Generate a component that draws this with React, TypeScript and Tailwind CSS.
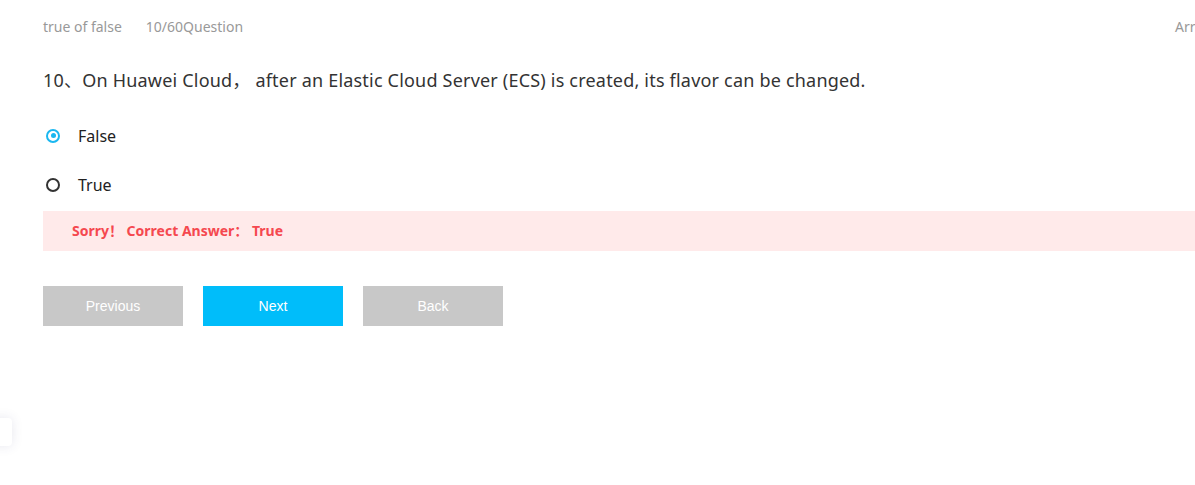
import React, { useState } from 'react';

const options = ['False', 'True'];

export default function App() {
    const [selected, setSelected] = useState('False');

    return (
        <div
            className="relative w-[1195px] h-[485px] overflow-hidden bg-white"
            style={{ fontFamily: '"Noto Sans", "Noto Sans CJK SC", sans-serif' }}
        >
            <div className="w-[1260px] pl-[43px]">
                <div className="flex items-center h-[54px] text-[14px] leading-[20px] text-[#999999]">
                    <span>true of false</span>
                    <span className="ml-[24px]">10/60Question</span>
                    <span className="ml-auto w-[85px]">Arrange</span>
                </div>
                <div className="mt-[3px] text-[18px] tracking-[0.2px] text-[#333333] leading-[46px]">
                    10、On Huawei Cloud， after an Elastic Cloud Server (ECS) is created, its flavor can be changed.
                </div>
                <div className="mt-[8px] flex flex-col">
                    {options.map((opt) => (
                        <label key={opt} className="flex items-center h-[49px] cursor-pointer" onClick={() => setSelected(opt)}>
                            <span
                                className={`ml-[3px] w-[14px] h-[14px] rounded-full border-2 flex items-center justify-center ${
                                    selected === opt ? 'border-[#1ab7f0]' : 'border-[#333333]'
                                }`}
                            >
                                {selected === opt && <span className="w-[5px] h-[5px] rounded-full bg-[#1ab7f0]" />}
                            </span>
                            <span className="ml-[18px] text-[16px] leading-[22px] text-[#222222]">{opt}</span>
                        </label>
                    ))}
                </div>
                <div className="mt-[2px] h-[40px] w-[1152px] bg-[#ffeaea] flex items-center pl-[29px] text-[14px] leading-[20px] font-bold text-[#f5484f]">
                    Sorry！ Correct Answer： True
                </div>
                <div
                    className="mt-[35px] flex gap-[20px] text-[14px] text-white"
                    style={{ fontFamily: '"Liberation Sans", Arial, sans-serif' }}
                >
                    <button className="w-[140px] h-[40px] bg-[#c8c8c8]">Previous</button>
                    <button className="w-[140px] h-[40px] bg-[#00bdfa]">Next</button>
                    <button className="w-[140px] h-[40px] bg-[#c8c8c8]">Back</button>
                </div>
            </div>
            <div className="absolute left-[-8px] top-[418px] w-[20px] h-[28px] rounded-[4px] bg-white shadow-[0_0_12px_rgba(60,60,120,0.12)]" />
        </div>
    );
}
